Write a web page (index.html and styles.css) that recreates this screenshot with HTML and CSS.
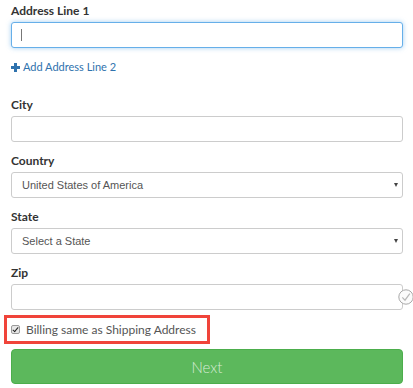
FILE: index.html
```html
<!DOCTYPE html>
<html lang="en">

<head>
    <meta charset="UTF-8">
    <meta name="viewport" content="width=device-width, initial-scale=1.0">
    <title>Address</title>
    <link rel="stylesheet" href="styles.css">
</head>

<body>
    <form class="address-form">
        <!-- address line 1 (focused) -->
        <div class="group">
            <label class="label" for="addr1">Address Line 1</label>
            <div class="control-wrap">
                <input class="control focused" id="addr1" type="text">
                <span class="caret"></span>
            </div>
        </div>

        <a class="add-line" href="javascript:void 0">
            <span class="plus"></span>Add Address Line 2
        </a>

        <div class="group">
            <label class="label" for="city">City</label>
            <input class="control" id="city" type="text">
        </div>

        <div class="group">
            <label class="label" for="country">Country</label>
            <div class="select-wrap">
                <select class="control select" id="country">
                    <option>United States of America</option>
                </select>
            </div>
        </div>

        <div class="group">
            <label class="label" for="state">State</label>
            <div class="select-wrap">
                <select class="control select" id="state">
                    <option>Select a State</option>
                </select>
            </div>
        </div>

        <div class="group group-zip">
            <label class="label" for="zip">Zip</label>
            <div class="control-wrap">
                <input class="control" id="zip" type="text">
                <svg class="valid" width="16" height="16" viewBox="0 0 16 16">
                    <circle cx="8" cy="8" r="7.2" fill="#fbfbfb" stroke="#a9a9a9" stroke-width="1"/>
                    <polyline points="4.3,8.4 7,11.2 11.8,4.6" fill="none" stroke="#b8b8b8" stroke-width="1.2"/>
                </svg>
            </div>
        </div>

        <div class="highlight">
            <label class="check">
                <input type="checkbox" checked>
                Billing same as Shipping Address
            </label>
        </div>

        <button class="btn-next" type="button">Next</button>
    </form>
</body>

</html>
```

FILE: styles.css
```css
* {
    margin: 0;
    padding: 0;
    box-sizing: border-box;
}

body {
    background: #fff;
    font-family: Lato, "Open Sans", sans-serif;
    color: #333;
}

.address-form {
    padding: 2px 10px 0 11px;
}

.group {
    margin-bottom: 10px;
}

.label {
    display: block;
    font-size: 12px;
    font-weight: bold;
    line-height: 18px;
    margin-bottom: 2px;
    color: #333;
}

.control {
    display: block;
    width: 100%;
    height: 26px;
    border: 1px solid #ccc;
    border-radius: 3px;
    background: #fff;
    font-family: "Liberation Sans", Arial, sans-serif;
    font-size: 11px;
    color: #555;
    padding: 0 10px;
    outline: none;
}

.control.focused {
    border-color: #66afe9;
    box-shadow: 0 0 5px rgba(102, 175, 233, .6);
}

.control-wrap {
    position: relative;
}

.caret {
    position: absolute;
    left: 10px;
    top: 7px;
    width: 1px;
    height: 12px;
    background: #777;
}

.add-line {
    display: block;
    margin: 10px 0 20px;
    font-size: 11px;
    line-height: 18px;
    color: #2f72ad;
    text-decoration: none;
}

.plus {
    display: inline-block;
    position: relative;
    width: 9px;
    height: 9px;
    margin-right: 3px;
    vertical-align: -1px;
}

.plus:before,
.plus:after {
    content: "";
    position: absolute;
    background: #2f72ad;
}

.plus:before {
    left: 0;
    top: 3px;
    width: 9px;
    height: 3px;
}

.plus:after {
    left: 3px;
    top: 0;
    width: 3px;
    height: 9px;
}

.select-wrap {
    position: relative;
}

.select {
    appearance: none;
    -webkit-appearance: none;
}

.select-wrap:after {
    content: "";
    position: absolute;
    right: 5px;
    top: 11px;
    border-left: 2.5px solid transparent;
    border-right: 2.5px solid transparent;
    border-top: 4px solid #444;
}

.group-zip {
    margin-bottom: 5px;
}

.valid {
    position: absolute;
    right: -11px;
    top: 5px;
}

.highlight {
    display: inline-block;
    margin-left: -7px;
    border: 3px solid #f0443a;
    padding: 0 11px 0 4px;
}

.check {
    display: flex;
    align-items: center;
    height: 23px;
    font-size: 12px;
    color: #555;
}

.check input {
    appearance: none;
    -webkit-appearance: none;
    position: relative;
    width: 9px;
    height: 9px;
    margin-right: 6px;
    border: 1px solid #9a9a9a;
    border-radius: 2px;
    background: #e6e6e6;
}

.check input:after {
    content: "";
    position: absolute;
    left: 2px;
    top: 0;
    width: 2px;
    height: 5px;
    border-right: 1.5px solid #222;
    border-bottom: 1.5px solid #222;
    transform: rotate(40deg);
}

.btn-next {
    display: block;
    width: 100%;
    height: 35px;
    margin-top: 5px;
    border: 1px solid #4cae4c;
    border-radius: 4px;
    background: #5cb85c;
    color: rgba(255, 255, 255, .75);
    font-family: Lato, "Open Sans", sans-serif;
    font-size: 15px;
    font-weight: 300;
}
```
